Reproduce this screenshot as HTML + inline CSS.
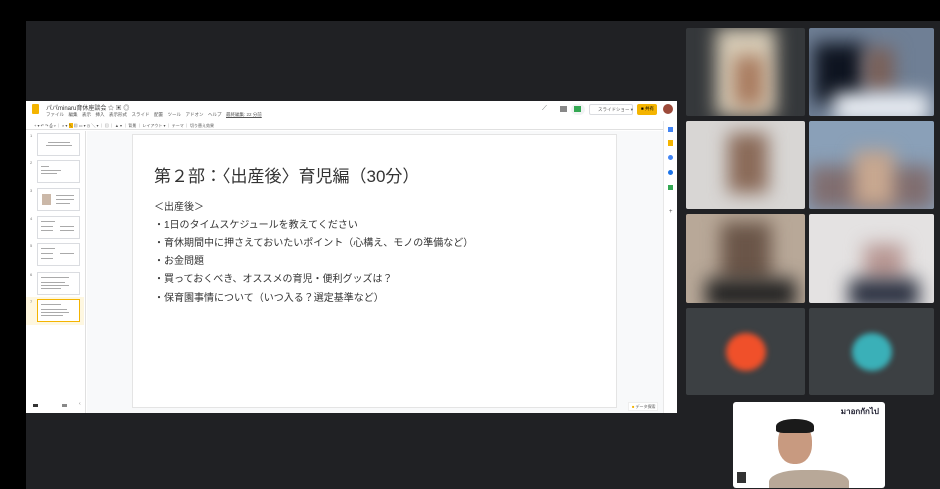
<!DOCTYPE html>
<html><head><meta charset="utf-8"><style>
*{margin:0;padding:0;box-sizing:border-box}
body{width:940px;height:489px;background:#000;position:relative;overflow:hidden;font-family:"Liberation Sans","Noto Sans CJK JP",sans-serif}
.a{position:absolute}
.dark{left:26px;top:21px;width:914px;height:468px;background:#202124}
.win{left:26px;top:101px;width:651px;height:312px;background:#fff}
.tile{position:absolute;overflow:hidden;background:#3c4043;border-radius:2px}
.bl{position:absolute;filter:blur(9px)}
.th{position:absolute;left:11px;width:43px;height:23px;border:1px solid #dadce0;background:#fff}
.tn{position:absolute;left:4px;font-size:4px;color:#777}
.ln{position:absolute;height:1px;background:#aaa}
.sl{font-size:10px;color:#333;position:absolute;left:154px;white-space:nowrap}
</style></head><body>
<div class="a dark"></div>

<div class="a win">
  <div class="a" style="left:6px;top:3px;width:7px;height:10px;background:#f4b400;border-radius:1px"></div>
  <div class="a" style="left:20px;top:2px;font-size:6px;color:#333;white-space:nowrap">パパminaru育休座談会 ☆ ▣ ◎</div>
  <div class="a" style="left:20px;top:11px;font-size:4.5px;color:#555;white-space:nowrap">ファイル　編集　表示　挿入　表示形式　スライド　配置　ツール　アドオン　ヘルプ　<u>最終編集: 22 分前</u></div>
  <div class="a" style="left:516px;top:4px;font-size:7px;color:#666">⟋</div>
  <div class="a" style="left:534px;top:5px;width:7px;height:6px;background:#888"></div>
  <div class="a" style="left:545px;top:3px;width:14px;height:11px;border-radius:6px;background:#f1f3f4"><div class="a" style="left:3px;top:2px;width:7px;height:6px;background:#34a853"></div></div>
  <div class="a" style="left:563px;top:3px;width:44px;height:11px;border:1px solid #dadce0;border-radius:2px;font-size:4.5px;color:#555;padding:2px 0 0 8px;white-space:nowrap">スライドショー ▾</div>
  <div class="a" style="left:611px;top:3px;width:20px;height:11px;background:#f4b400;border-radius:2px;font-size:4.5px;padding:2px 0 0 4px;white-space:nowrap">■ 共有</div>
  <div class="a" style="left:637px;top:3px;width:10px;height:10px;border-radius:50%;background:#9c4a3a"></div>
  <div class="a" style="left:0;top:20px;width:637px;height:9px;border-bottom:1px solid #e0e0e0;font-size:4px;color:#555;padding:2px 0 0 8px;white-space:nowrap">+ ▾ ↶ ↷ ⎙ ▿ ｜ ⌕ ▾ <span style="background:#f4b400">↖</span> ▦ ▭ ▾ ◷ ╲ ▾ ｜ ▤ ｜ ▲ ▾ ｜ 背景 ｜ レイアウト ▾ ｜ テーマ ｜ 切り替え効果</div>
  <div class="a" style="left:637px;top:20px;width:14px;height:292px;background:#fff;border-left:1px solid #e8e8e8"></div>
  <div class="a" style="left:642px;top:26px;width:5px;height:5px;background:#4285f4"></div>
  <div class="a" style="left:642px;top:39px;width:5px;height:6px;background:#f4b400"></div>
  <div class="a" style="left:642px;top:54px;width:5px;height:5px;border-radius:50%;background:#4285f4"></div>
  <div class="a" style="left:642px;top:69px;width:5px;height:5px;border-radius:50%;background:#1a73e8"></div>
  <div class="a" style="left:642px;top:84px;width:5px;height:5px;background:#34a853"></div>
  <div class="a" style="left:643px;top:108px;font-size:6px;color:#555">+</div>
  <div class="a" style="left:61px;top:30px;width:576px;height:282px;background:#f8f9fa"></div>
  <div class="a" style="left:59px;top:30px;width:1px;height:282px;background:#e0e0e0"></div>
  <div class="th" style="top:32px"><div class="ln" style="left:10px;top:8px;width:22px"></div><div class="ln" style="left:8px;top:11px;width:26px"></div></div>
  <div class="th" style="top:59px"><div class="ln" style="left:3px;top:5px;width:8px"></div><div class="ln" style="left:3px;top:9px;width:20px"></div><div class="ln" style="left:3px;top:12px;width:16px"></div></div>
  <div class="th" style="top:87px"><div class="a" style="left:4px;top:5px;width:9px;height:11px;background:#cbb8a8"></div><div class="ln" style="left:18px;top:6px;width:18px"></div><div class="ln" style="left:18px;top:10px;width:18px"></div><div class="ln" style="left:18px;top:14px;width:14px"></div></div>
  <div class="th" style="top:115px"><div class="ln" style="left:3px;top:4px;width:14px"></div><div class="ln" style="left:3px;top:9px;width:12px"></div><div class="ln" style="left:22px;top:9px;width:14px"></div><div class="ln" style="left:3px;top:13px;width:12px"></div><div class="ln" style="left:22px;top:13px;width:14px"></div></div>
  <div class="th" style="top:142px"><div class="ln" style="left:3px;top:4px;width:14px"></div><div class="ln" style="left:3px;top:9px;width:12px"></div><div class="ln" style="left:22px;top:9px;width:14px"></div><div class="ln" style="left:3px;top:14px;width:12px"></div></div>
  <div class="th" style="top:171px"><div class="ln" style="left:3px;top:4px;width:28px"></div><div class="ln" style="left:3px;top:9px;width:24px"></div><div class="ln" style="left:3px;top:12px;width:28px"></div><div class="ln" style="left:3px;top:15px;width:20px"></div></div>
  <div class="a" style="left:0;top:196px;width:58px;height:28px;background:#fef7e0"></div>
  <div class="th" style="top:198px;border:1.5px solid #f4b400"><div class="ln" style="left:3px;top:4px;width:20px"></div><div class="ln" style="left:3px;top:9px;width:26px"></div><div class="ln" style="left:3px;top:12px;width:28px"></div><div class="ln" style="left:3px;top:15px;width:22px"></div></div>
  <div class="tn" style="top:32px">1</div><div class="tn" style="top:59px">2</div><div class="tn" style="top:87px">3</div><div class="tn" style="top:115px">4</div><div class="tn" style="top:142px">5</div><div class="tn" style="top:171px">6</div><div class="tn" style="top:198px">7</div>
  <div class="a" style="left:7px;top:303px;width:5px;height:3px;background:#333"></div>
  <div class="a" style="left:36px;top:303px;width:5px;height:3px;background:#888"></div>
  <div class="a" style="left:53px;top:300px;font-size:5px;color:#777">‹</div>
  <div class="a" style="left:106px;top:33px;width:485px;height:274px;background:#fff;border:1px solid #e4e4e4"></div>
  <div class="a" style="left:602px;top:301px;width:30px;height:9px;background:#fff;border:1px solid #eee;font-size:4px;color:#555;padding:1px 0 0 3px;white-space:nowrap"><span style="color:#f4b400">■</span> データ探索</div>
</div>
<div class="a" style="left:154px;top:162px;font-size:17px;color:#333;white-space:nowrap">第２部：〈出産後〉育児編（30分）</div>
<div class="sl" style="top:198px">＜出産後＞</div>
<div class="sl" style="top:216px">・1日のタイムスケジュールを教えてください</div>
<div class="sl" style="top:234px">・育休期間中に押さえておいたいポイント（心構え、モノの準備など）</div>
<div class="sl" style="top:252px">・お金問題</div>
<div class="sl" style="top:270px">・買っておくべき、オススメの育児・便利グッズは？</div>
<div class="sl" style="top:289px">・保育園事情について（いつ入る？選定基準など）</div>

<div class="tile" style="left:686px;top:28px;width:119px;height:88px;background:#35383b">
  <div class="bl" style="left:30px;top:0;width:60px;height:88px;background:#d8cdb8"></div>
  <div class="bl" style="left:48px;top:28px;width:30px;height:50px;background:#a87a5e"></div>
</div>
<div class="tile" style="left:809px;top:28px;width:125px;height:88px;background:#6f7f95">
  <div class="bl" style="left:5px;top:15px;width:50px;height:60px;background:#0e1420"></div>
  <div class="bl" style="left:55px;top:20px;width:30px;height:45px;background:#7a6058"></div>
  <div class="bl" style="left:25px;top:65px;width:95px;height:30px;background:#e8ecf2"></div>
</div>
<div class="tile" style="left:686px;top:121px;width:119px;height:88px;background:#d8d6d4">
  <div class="bl" style="left:42px;top:12px;width:40px;height:60px;background:#8a6a58"></div>
</div>
<div class="tile" style="left:809px;top:121px;width:125px;height:88px;background:#8aa0b8">
  <div class="bl" style="left:0;top:45px;width:125px;height:43px;background:#806e70"></div>
  <div class="bl" style="left:45px;top:30px;width:40px;height:55px;background:#c8a890"></div>
</div>
<div class="tile" style="left:686px;top:214px;width:119px;height:89px;background:#b8a898">
  <div class="bl" style="left:35px;top:8px;width:50px;height:60px;background:#6a5548"></div>
  <div class="bl" style="left:20px;top:65px;width:90px;height:30px;background:#222"></div>
</div>
<div class="tile" style="left:809px;top:214px;width:125px;height:89px;background:#e4e2e2">
  <div class="bl" style="left:55px;top:30px;width:40px;height:40px;background:#b89894"></div>
  <div class="bl" style="left:40px;top:65px;width:70px;height:30px;background:#2a3040"></div>
</div>
<div class="tile" style="left:686px;top:308px;width:119px;height:87px;background:#3c4043">
  <div class="bl" style="left:40px;top:25px;width:40px;height:38px;border-radius:50%;background:#f0502a;filter:blur(3px)"></div>
</div>
<div class="tile" style="left:809px;top:308px;width:125px;height:87px;background:#3c4043">
  <div class="bl" style="left:43px;top:25px;width:40px;height:38px;border-radius:50%;background:#3ab0b8;filter:blur(3px)"></div>
</div>

<div class="a" style="left:733px;top:402px;width:152px;height:86px;background:#fff;border-radius:3px;overflow:hidden">
  <div class="a" style="right:6px;top:3px;font-size:8px;color:#223;font-weight:bold">มาอกกักไป</div>
  <div class="a" style="left:36px;top:68px;width:80px;height:30px;border-radius:40% 40% 0 0;background:#b8a898"></div>
  <div class="a" style="left:45px;top:20px;width:34px;height:42px;border-radius:45%;background:#c89a80"></div>
  <div class="a" style="left:43px;top:17px;width:38px;height:14px;border-radius:50% 50% 20% 20%;background:#1a1a1a"></div>
  <div class="a" style="left:4px;top:70px;width:9px;height:11px;background:#333"></div>
</div>
</body></html>
